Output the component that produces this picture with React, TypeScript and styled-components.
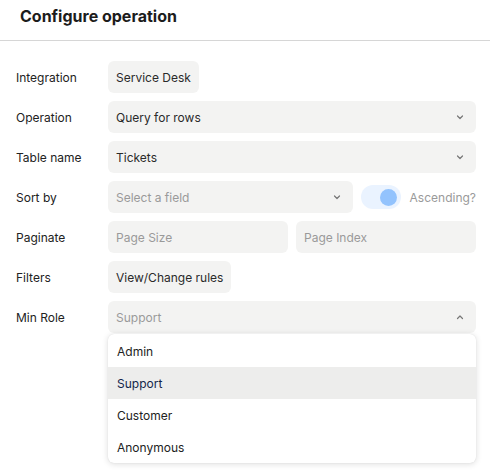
import styled, { createGlobalStyle } from "styled-components";

const GlobalStyle = createGlobalStyle`
  body {
    margin: 0;
    background: #ffffff;
    font-family: Inter, "Noto Sans", "Liberation Sans", sans-serif;
    color: #222222;
  }
`;

const INPUT_BG = "#f3f3f2";
const PLACEHOLDER = "#9a9a9a";

const Panel = styled.div`
  width: 490px;
  height: 476px;
  background: #ffffff;
`;

const Header = styled.header`
  padding: 4px 20px 12px;
  border-bottom: 1px solid #d6d6d6;
  font-size: 16px;
  line-height: 24px;
  font-weight: 700;
  color: #1c1c1c;
`;

const Form = styled.div`
  display: grid;
  grid-template-columns: 92px 1fr;
  row-gap: 8px;
  padding: 20px 14px 0 16px;
`;

const Label = styled.div`
  display: flex;
  align-items: center;
  height: 32px;
  font-size: 12px;
  color: #222222;
`;

const Field = styled.div`
  position: relative;
  display: flex;
  align-items: center;
  gap: 8px;
  min-width: 0;
`;

const Box = styled.div<{ $muted?: boolean; $grow?: boolean }>`
  display: flex;
  align-items: center;
  justify-content: space-between;
  height: 32px;
  padding: ${(p) => (p.$grow ? "0 12px 0 8px" : "0 8px")};
  box-sizing: border-box;
  background: ${INPUT_BG};
  border-radius: 6px;
  font-size: 12px;
  color: ${(p) => (p.$muted ? PLACEHOLDER : "#2a2a2a")};
  flex: ${(p) => (p.$grow ? "1 1 0" : "0 0 auto")};
  min-width: 0;
`;

const Chevron = ({ up }: { up?: boolean }) => (
  <svg width="8" height="6" viewBox="0 0 8 6" fill="none">
    <path
      d={up ? "M1.5 4.5 L4 2 L6.5 4.5" : "M1.5 2 L4 4.5 L6.5 2"}
      stroke="#777"
      strokeWidth="1.2"
      strokeLinecap="round"
      strokeLinejoin="round"
    />
  </svg>
);

const Toggle = styled.div`
  flex: 0 0 auto;
  width: 40px;
  height: 24px;
  border-radius: 12px;
  background: #eaf3ff;
  display: flex;
  align-items: center;
  justify-content: flex-end;
  padding: 0 4px;
  box-sizing: border-box;
`;

const Knob = styled.div`
  width: 17px;
  height: 17px;
  border-radius: 50%;
  background: #93c3fd;
`;

const SideText = styled.span`
  font-size: 12px;
  margin-left: 1px;
  color: ${PLACEHOLDER};
  white-space: nowrap;
`;

const Menu = styled.ul`
  position: absolute;
  top: 33px;
  left: 0;
  right: 0;
  margin: 0;
  padding: 1px 0 0;
  list-style: none;
  background: #ffffff;
  border-radius: 6px;
  box-shadow: 0 1px 6px rgba(0, 0, 0, 0.14), 0 0 1px rgba(0, 0, 0, 0.12);
  overflow: hidden;
  z-index: 2;
`;

const Item = styled.li<{ $active?: boolean }>`
  height: 32px;
  display: flex;
  align-items: center;
  padding: 0 9px;
  font-size: 12px;
  background: ${(p) => (p.$active ? "#ededec" : "transparent")};
  color: ${(p) => (p.$active ? "#12264a" : "#222222")};
`;

const roles = ["Admin", "Support", "Customer", "Anonymous"];

export default function App() {
  return (
    <Panel>
      <GlobalStyle />
      <Header>Configure operation</Header>
      <Form>
        <Label>Integration</Label>
        <Field>
          <Box>Service Desk</Box>
        </Field>

        <Label>Operation</Label>
        <Field>
          <Box $grow>
            Query for rows
            <Chevron />
          </Box>
        </Field>

        <Label>Table name</Label>
        <Field>
          <Box $grow>
            Tickets
            <Chevron />
          </Box>
        </Field>

        <Label>Sort by</Label>
        <Field>
          <Box $grow $muted>
            Select a field
            <Chevron />
          </Box>
          <Toggle>
            <Knob />
          </Toggle>
          <SideText>Ascending?</SideText>
        </Field>

        <Label>Paginate</Label>
        <Field>
          <Box $grow $muted>
            Page Size
          </Box>
          <Box $grow $muted>
            Page Index
          </Box>
        </Field>

        <Label>Filters</Label>
        <Field>
          <Box>View/Change rules</Box>
        </Field>

        <Label>Min Role</Label>
        <Field>
          <Box $grow $muted>
            Support
            <Chevron up />
          </Box>
          <Menu>
            {roles.map((r) => (
              <Item key={r} $active={r === "Support"}>
                {r}
              </Item>
            ))}
          </Menu>
        </Field>
      </Form>
    </Panel>
  );
}
